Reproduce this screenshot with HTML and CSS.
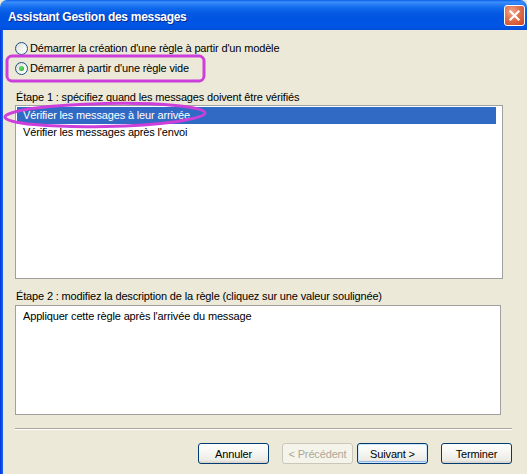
FILE: index.html
```html
<!DOCTYPE html>
<html lang="fr">
<head>
<meta charset="utf-8">
<title>Assistant Gestion des messages</title>
<link rel="stylesheet" href="styles.css">
</head>
<body>
<div class="window">
  <div class="titlebar">
    <span class="title">Assistant Gestion des messages</span>
    <span class="close" aria-label="Fermer">
      <svg width="13" height="13" viewBox="0 0 13 13"><path d="M2.5 2.5 L10.5 10.5 M10.5 2.5 L2.5 10.5" stroke="#fff" stroke-width="2.2" stroke-linecap="square"/></svg>
    </span>
  </div>
  <div class="frame">
    <div class="frame-left"></div>
    <div class="client">
      <div class="radios">
        <label class="radio-row"><span class="radio"></span><span>Démarrer la création d'une règle à partir d'un modèle</span></label>
        <label class="radio-row"><span class="radio checked"></span><span>Démarrer à partir d'une règle vide</span></label>
      </div>
      <div class="caption step1">Étape 1 : spécifiez quand les messages doivent être vérifiés</div>
      <div class="listbox">
        <div class="item selected">Vérifier les messages à leur arrivée</div>
        <div class="item">Vérifier les messages après l'envoi</div>
      </div>
      <div class="caption step2">Étape 2 : modifiez la description de la règle (cliquez sur une valeur soulignée)</div>
      <div class="descbox">Appliquer cette règle après l'arrivée du message</div>
      <div class="separator"></div>
      <div class="buttons">
        <button class="btn">Annuler</button>
        <button class="btn disabled">&lt; Précédent</button>
        <button class="btn default">Suivant &gt;</button>
        <button class="btn finish">Terminer</button>
      </div>
    </div>
  </div>
  <svg class="mark-rect" width="202" height="30" viewBox="0 0 202 30"><rect x="2" y="2" width="197" height="25" rx="5" ry="5" fill="none" stroke="#cc3fdb" stroke-width="3"/></svg>
  <svg class="mark-ellipse" width="206" height="30" viewBox="0 0 206 30"><ellipse cx="103" cy="15" rx="100" ry="11.5" fill="none" stroke="#cc3fdb" stroke-width="3" transform="rotate(-1.2 103 15)"/></svg>
</div>
</body>
</html>
```
FILE: styles.css
```css
* { box-sizing: border-box; }
html, body { margin: 0; padding: 0; }
body {
  width: 527px;
  height: 474px;
  overflow: hidden;
  background: #ECE9D8;
  font-family: "Liberation Sans", Arial, sans-serif;
  font-size: 11px;
  letter-spacing: -0.15px;
  color: #000;
}
.window {
  position: relative;
  width: 527px;
  height: 474px;
  display: flex;
  flex-direction: column;
}
.titlebar {
  height: 30px;
  flex: none;
  display: flex;
  align-items: center;
  justify-content: space-between;
  padding: 0 2px 0 8px;
  border-radius: 7px 7px 0 0;
  background: linear-gradient(to bottom, #0a5ee8 0%, #3d8ffb 7%, #2a7ff6 14%, #0e68ec 28%, #0458e2 45%, #0054e3 65%, #0055e6 85%, #004fd9 100%);
}
.title {
  color: #fff;
  font-family: "Liberation Sans", Arial, sans-serif;
  font-weight: bold;
  font-size: 12px;
  letter-spacing: -0.3px;
  padding-top: 3px;
  text-shadow: 1px 1px 0 #0a2a8a;
}
.close {
  width: 21px;
  height: 21px;
  border: 1px solid #fff;
  border-radius: 3px;
  background: radial-gradient(circle at 35% 30%, #f2a58a 0%, #e0704e 45%, #c8441f 100%);
  display: flex;
  align-items: center;
  justify-content: center;
  margin-top: 1px;
}
.frame {
  flex: 1;
  display: flex;
}
.frame-left {
  width: 3px;
  background: linear-gradient(to right, #0831d9, #166aee);
}
.client {
  flex: 1;
  padding: 8px 12px 0 12px;
  display: flex;
  flex-direction: column;
}
.radios {
  display: flex;
  flex-direction: column;
}
.radio-row {
  height: 20px;
  display: flex;
  align-items: center;
  gap: 2px;
}
.radio {
  width: 13px;
  height: 13px;
  border-radius: 50%;
  border: 1px solid #1c5180;
  background: linear-gradient(135deg, #dcdcd5 0%, #f2f2ee 50%, #ffffff 100%);
  display: flex;
  align-items: center;
  justify-content: center;
}
.radio.checked::after {
  content: "";
  width: 5px;
  height: 5px;
  border-radius: 50%;
  background: radial-gradient(circle at 40% 35%, #6ee06e, #21a121);
}
.caption {
  height: 16px;
  line-height: 16px;
  padding-left: 1px;
}
.step1 { margin-top: 11px; }
.step2 { margin-top: 8px; height: 18px; line-height: 18px; }
.listbox {
  width: 488px;
  height: 174px;
  border: 1px solid #a0a0a0;
  background: #fff;
  padding: 1px;
}
.item {
  width: 479px;
  height: 17px;
  line-height: 17px;
  padding-left: 6px;
}
.item.selected {
  background: #316ac5;
  color: #fff;
}
.descbox {
  width: 486px;
  height: 110px;
  border: 1px solid #a0a0a0;
  background: #fff;
  padding: 3px 0 0 7px;
  line-height: 15px;
}
.separator {
  margin-top: 13px;
  height: 2px;
  border-top: 1px solid #aca899;
  border-bottom: 1px solid #fff;
  width: 497px;
}
.buttons {
  margin-top: 13px;
  display: flex;
  justify-content: flex-end;
  width: 497px;
  gap: 4px;
}
.btn {
  width: 71px;
  height: 21px;
  padding: 0;
  font-family: "Liberation Sans", Arial, sans-serif;
  font-size: 11px;
  letter-spacing: -0.15px;
  color: #000;
  border: 1px solid #003c74;
  border-radius: 3px;
  background: linear-gradient(to bottom, #ffffff 0%, #f7f7f4 40%, #ecebe6 85%, #d6d0c5 100%);
}
.btn.disabled {
  color: #aca899;
  border-color: #c9c7ba;
  background: #f5f4ea;
  margin-left: 9px;
}
.btn.default {
  box-shadow: inset 0 0 0 1px #cee7ff, inset 0 -1px 0 1px #98b8ea;
}
.btn.finish { margin-left: 9px; }
.mark-rect {
  position: absolute;
  left: 5px;
  top: 54px;
}
.mark-ellipse {
  position: absolute;
  left: 2px;
  top: 100px;
}
```
